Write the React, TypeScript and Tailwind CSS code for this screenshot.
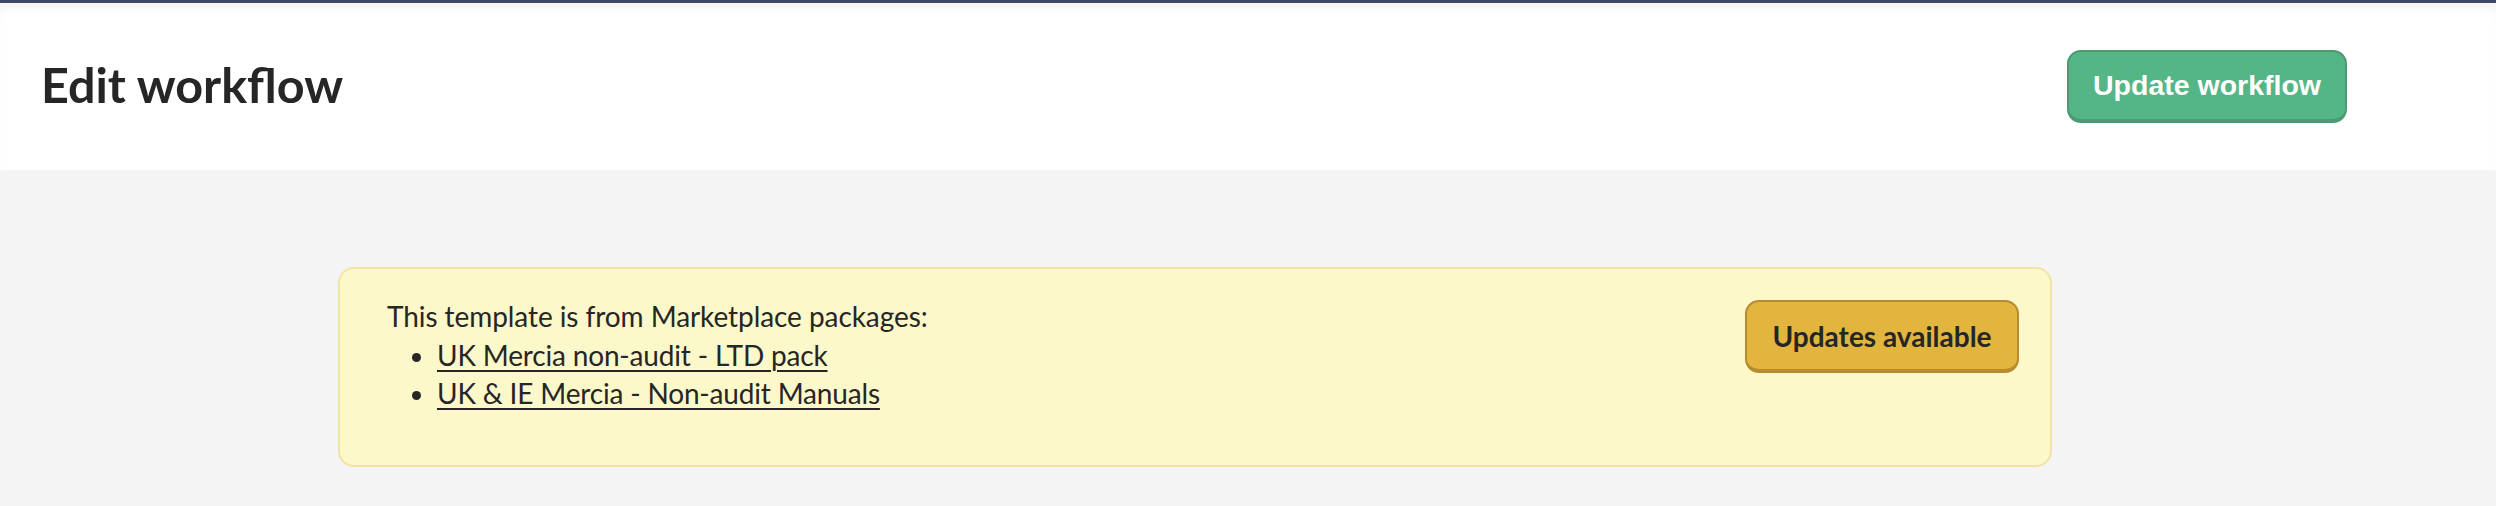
const lato = { fontFamily: "Lato, 'Noto Sans', sans-serif" };

export default function App() {
  return (
    <div className="w-[2496px] h-[506px] bg-[#f4f4f4] overflow-hidden" style={lato}>
      <div className="h-[3px] bg-[#3e4a64]" />
      <header className="h-[167px] bg-white flex items-center justify-between pl-[41px] pr-[149px] shadow-[inset_0_10px_14px_-8px_rgba(0,0,0,0.07)]">
        <h1 className="-mt-[5px] text-[48.5px] font-bold text-[#262626] leading-none">Edit workflow</h1>
        <button
          className="w-[280px] h-[73px] rounded-[14px] bg-[#55b685] border-2 border-[#4b9a72] border-b-[4px] text-white text-[28.5px] font-bold"
          style={{ fontFamily: "'Liberation Sans', Arial, sans-serif" }}
        >
          Update workflow
        </button>
      </header>

      <div className="pt-[97px] pl-[338px]">
        <div className="w-[1714px] h-[200px] rounded-[16px] bg-[#fdf8c9] border-2 border-[#f3e3a3] pl-[47px] pr-[31px] pt-[28px] flex justify-between">
          <div className="text-[28px] leading-[38.5px] text-[#262626]">
            <p className="tracking-[-0.07px]">This template is from Marketplace packages:</p>
            <ul className="list-disc pl-[50px] tracking-[-0.17px]">
              <li><a className="underline decoration-2 underline-offset-[4px]">UK Mercia non-audit - LTD pack</a></li>
              <li><a className="underline decoration-2 underline-offset-[4px]">UK &amp; IE Mercia - Non-audit Manuals</a></li>
            </ul>
          </div>
          <button className="mt-[3px] w-[274px] h-[73px] rounded-[14px] bg-[#e2b53e] border-2 border-[#b98b30] border-b-[4px] text-[#262626] text-[28px] font-bold">
            Updates available
          </button>
        </div>
      </div>
    </div>
  );
}
